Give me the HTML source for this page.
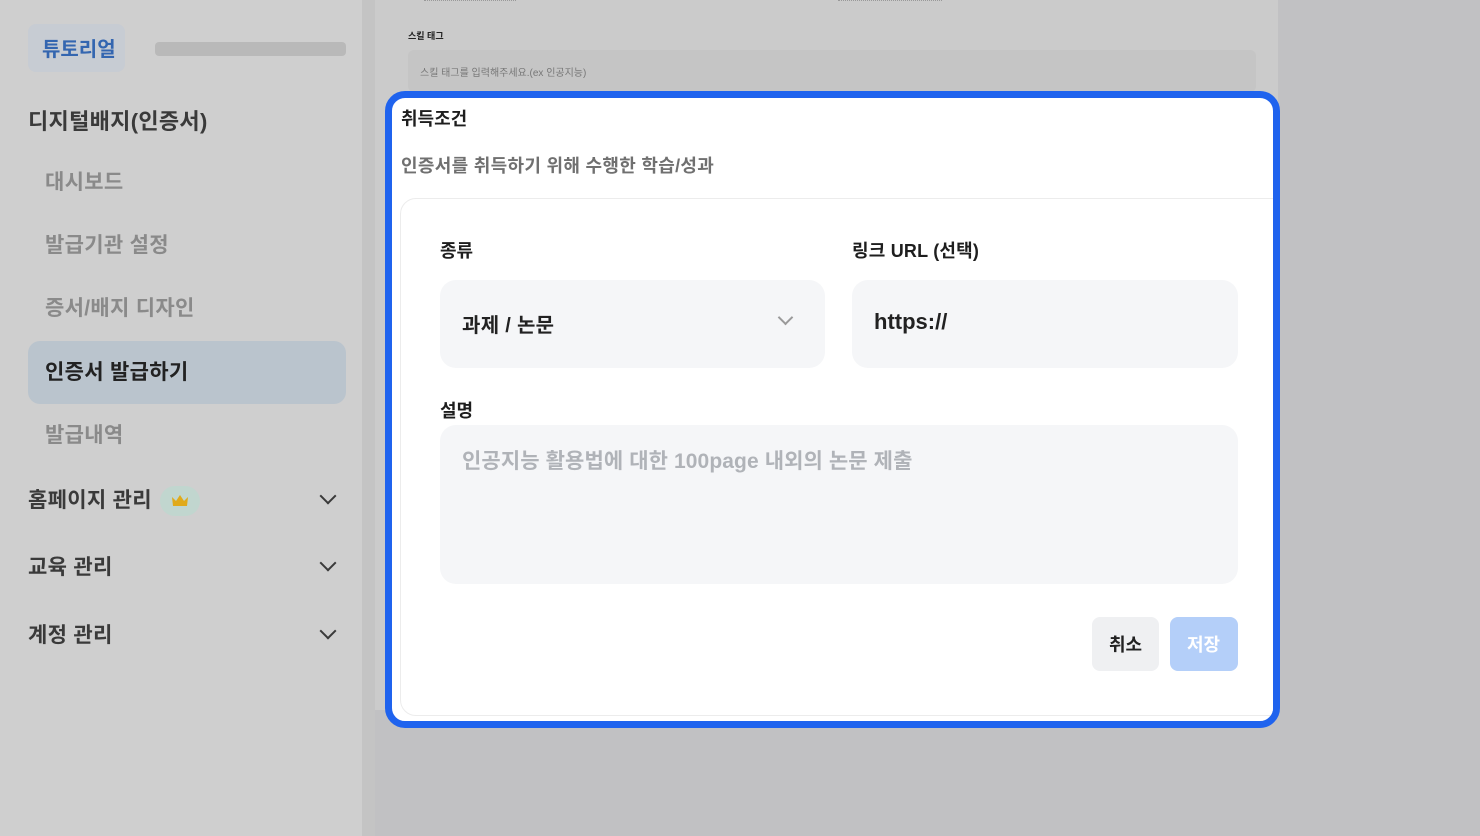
<!DOCTYPE html>
<html><head><meta charset="utf-8"><style>
*{margin:0;padding:0;box-sizing:border-box}
body{width:1480px;height:836px;position:relative;overflow:hidden;background:#c1c1c3;font-family:"Liberation Sans","Noto Sans CJK KR",sans-serif;font-weight:700}
.a{position:absolute;white-space:nowrap}
.side{position:absolute;left:0;top:0;width:362px;height:836px;background:#cfcfcf}
.sb{position:absolute;left:362px;top:0;width:13px;height:836px;background:#c4c4c4}
.mid{position:absolute;left:375px;top:0;width:903px;height:710px;background:#cbcbcb}
.nav{font-size:21px;color:#3a3a3a;letter-spacing:0.3px}
.sub{font-size:21px;color:#8a8a8a;letter-spacing:0.3px}
.chev{position:absolute;width:12px;height:12px;border-right:2.5px solid #3a3a3a;border-bottom:2.5px solid #3a3a3a;transform:rotate(45deg)}
.modal{position:absolute;left:385px;top:91px;width:895px;height:637px;border:7px solid #1f63ee;border-radius:20px;background:#fff;overflow:hidden}
.card{position:absolute;left:8px;top:100px;width:900px;height:518px;border:1px solid #ececec;border-radius:16px;background:#fff}
.inp{position:absolute;background:#f5f6f8;border-radius:16px}
.lbl{font-size:18px;color:#1e1e1e}
</style></head><body>
<div class="side"></div><div class="sb"></div><div class="mid"></div>
<div class="a" style="left:28px;top:24px;width:97px;height:48px;background:#c7ccd3;border-radius:8px"></div>
<div class="a" style="left:42px;top:33px;font-size:20px;color:#3466b0">튜토리얼</div>
<div class="a" style="left:155px;top:42px;width:191px;height:14px;background:#b9b9b9;border-radius:4px"></div>
<div class="a nav" style="left:28px;top:104px;font-size:22px">디지털배지(인증서)</div>
<div class="a sub" style="left:45px;top:166px">대시보드</div>
<div class="a sub" style="left:45px;top:229px">발급기관 설정</div>
<div class="a sub" style="left:45px;top:292px">증서/배지 디자인</div>
<div class="a" style="left:28px;top:341px;width:318px;height:63px;background:#bac4cd;border-radius:12px"></div>
<div class="a nav" style="left:45px;top:356px;color:#222">인증서 발급하기</div>
<div class="a sub" style="left:45px;top:419px">발급내역</div>
<div class="a nav" style="left:28px;top:484px">홈페이지 관리</div>
<div class="a" style="left:160px;top:486px;width:40px;height:30px;background:#c1d6cf;border-radius:15px"></div>
<svg class="a" style="left:171px;top:494px" width="18" height="14" viewBox="0 0 18 14"><path d="M1 3 L5 7 L9 1 L13 7 L17 3 L16 12 L2 12 Z" fill="#e0aa1a"/></svg>
<div class="chev" style="left:322px;top:490px"></div>
<div class="a nav" style="left:28px;top:551px">교육 관리</div>
<div class="chev" style="left:322px;top:557px"></div>
<div class="a nav" style="left:28px;top:619px">계정 관리</div>
<div class="chev" style="left:322px;top:625px"></div>
<div class="a" style="left:424px;top:0;width:92px;height:1px;border-top:1px dotted #999"></div>
<div class="a" style="left:838px;top:0;width:104px;height:1px;border-top:1px dotted #999"></div>
<div class="a" style="left:408px;top:29px;font-size:9px;color:#222">스킬 태그</div>
<div class="a" style="left:408px;top:50px;width:848px;height:42px;background:#c5c5c5;border-radius:6px"></div>
<div class="a" style="left:420px;top:64px;font-size:10px;font-weight:400;color:#777">스킬 태그를 입력해주세요.(ex 인공지능)</div>
<div class="modal">
 <div class="a" style="left:9px;top:7px;font-size:18px;color:#1e1e1e">취득조건</div>
 <div class="a" style="left:9px;top:54px;font-size:18px;color:#707070;letter-spacing:0.3px">인증서를 취득하기 위해 수행한 학습/성과</div>
 <div class="card">
  <div class="a lbl" style="left:39px;top:38px">종류</div>
  <div class="a lbl" style="left:451px;top:38px;letter-spacing:0.2px">링크 URL (선택)</div>
  <div class="inp" style="left:39px;top:81px;width:385px;height:88px"></div>
  <div class="a" style="left:61px;top:110px;font-size:20px;color:#222;letter-spacing:0.3px">과제 / 논문</div>
  <div class="a" style="left:379px;top:113px;width:11px;height:11px;border-right:2px solid #9a9a9a;border-bottom:2px solid #9a9a9a;transform:rotate(45deg)"></div>
  <div class="inp" style="left:451px;top:81px;width:386px;height:88px"></div>
  <div class="a" style="left:473px;top:110px;font-size:22px;color:#222">https://</div>
  <div class="a lbl" style="left:39px;top:198px">설명</div>
  <div class="inp" style="left:39px;top:226px;width:798px;height:159px"></div>
  <div class="a" style="left:61px;top:246px;font-size:21px;color:#b0b3b8;letter-spacing:0.1px">인공지능 활용법에 대한 100page 내외의 논문 제출</div>
  <div class="a" style="left:691px;top:418px;width:67px;height:54px;background:#eff0f2;border-radius:8px"></div>
  <div class="a" style="left:708px;top:432px;font-size:18px;color:#222">취소</div>
  <div class="a" style="left:769px;top:418px;width:68px;height:54px;background:#b4cff9;border-radius:8px"></div>
  <div class="a" style="left:786px;top:432px;font-size:18px;color:#fff">저장</div>
 </div>
</div>
</body></html>
